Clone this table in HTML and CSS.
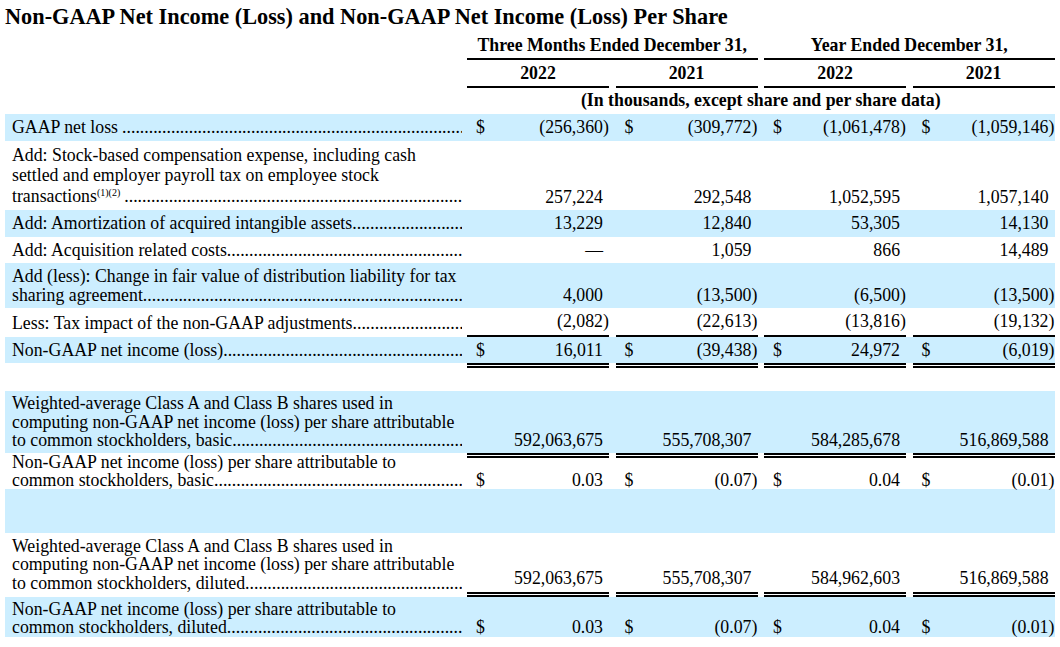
FILE: index.html
```html
<!DOCTYPE html>
<html lang="en">
<head>
<meta charset="utf-8">
<title>Non-GAAP Net Income (Loss)</title>
<link rel="stylesheet" href="styles.css">
</head>
<body>
<h1 class="title">Non-GAAP Net Income (Loss) and Non-GAAP Net Income (Loss) Per Share</h1>
<table class="fin">
<colgroup>
<col class="c-lbl">
<col class="c-cur"><col class="c-num"><col class="c-par"><col class="c-sp">
<col class="c-cur"><col class="c-num"><col class="c-par"><col class="c-sp">
<col class="c-cur"><col class="c-num"><col class="c-par"><col class="c-sp">
<col class="c-cur"><col class="c-num"><col class="c-par">
</colgroup>
<thead>
<tr class="hd1"><td></td><th colspan="7" class="ul">Three Months Ended December 31,</th><td></td><th colspan="7" class="ul">Year Ended December 31,</th></tr>
<tr class="hd2"><td></td><th colspan="3" class="ul">2022</th><td></td><th colspan="3" class="ul">2021</th><td></td><th colspan="3" class="ul">2022</th><td></td><th colspan="3" class="ul">2021</th></tr>
<tr class="hd3"><td></td><th colspan="15">(In thousands, except share and per share data)</th></tr>
</thead>
<tbody>
<tr class="b"><td class="lbl"><div class="lw"><div class="ld"><span class="gap">GAAP net loss</span><i></i></div></div></td>
<td class="cur">$</td><td class="num">(256,360</td><td class="par">)</td><td></td>
<td class="cur">$</td><td class="num">(309,772</td><td class="par">)</td><td></td>
<td class="cur">$</td><td class="num">(1,061,478</td><td class="par">)</td><td></td>
<td class="cur">$</td><td class="num">(1,059,146</td><td class="par">)</td></tr>

<tr class="sbc"><td class="lbl"><div class="lw">Add: Stock-based compensation expense, including cash<br>settled and employer payroll tax on employee stock<div class="ld"><span class="gap">transactions<sup>(1)(2)</sup></span><i></i></div></div></td>
<td class="cur"></td><td class="num">257,224</td><td class="par"></td><td></td>
<td class="cur"></td><td class="num">292,548</td><td class="par"></td><td></td>
<td class="cur"></td><td class="num">1,052,595</td><td class="par"></td><td></td>
<td class="cur"></td><td class="num">1,057,140</td><td class="par"></td></tr>

<tr class="b"><td class="lbl"><div class="lw"><div class="ld"><span>Add: Amortization of acquired intangible assets</span><i></i></div></div></td>
<td class="cur"></td><td class="num">13,229</td><td class="par"></td><td></td>
<td class="cur"></td><td class="num">12,840</td><td class="par"></td><td></td>
<td class="cur"></td><td class="num">53,305</td><td class="par"></td><td></td>
<td class="cur"></td><td class="num">14,130</td><td class="par"></td></tr>

<tr><td class="lbl"><div class="lw"><div class="ld"><span>Add: Acquisition related costs</span><i></i></div></div></td>
<td class="cur"></td><td class="num">—</td><td class="par"></td><td></td>
<td class="cur"></td><td class="num">1,059</td><td class="par"></td><td></td>
<td class="cur"></td><td class="num">866</td><td class="par"></td><td></td>
<td class="cur"></td><td class="num">14,489</td><td class="par"></td></tr>

<tr class="b"><td class="lbl"><div class="lw">Add (less): Change in fair value of distribution liability for tax<div class="ld"><span>sharing agreement</span><i></i></div></div></td>
<td class="cur"></td><td class="num">4,000</td><td class="par"></td><td></td>
<td class="cur"></td><td class="num">(13,500</td><td class="par">)</td><td></td>
<td class="cur"></td><td class="num">(6,500</td><td class="par">)</td><td></td>
<td class="cur"></td><td class="num">(13,500</td><td class="par">)</td></tr>

<tr><td class="lbl"><div class="lw"><div class="ld"><span>Less: Tax impact of the non-GAAP adjustments</span><i></i></div></div></td>
<td class="cur bb"></td><td class="num bb">(2,082</td><td class="par bb">)</td><td></td>
<td class="cur bb"></td><td class="num bb">(22,613</td><td class="par bb">)</td><td></td>
<td class="cur bb"></td><td class="num bb">(13,816</td><td class="par bb">)</td><td></td>
<td class="cur bb"></td><td class="num bb">(19,132</td><td class="par bb">)</td></tr>

<tr class="b"><td class="lbl"><div class="lw"><div class="ld"><span>Non-GAAP net income (loss)</span><i></i></div></div></td>
<td class="cur">$</td><td class="num">16,011</td><td class="par"></td><td></td>
<td class="cur">$</td><td class="num">(39,438</td><td class="par">)</td><td></td>
<td class="cur">$</td><td class="num">24,972</td><td class="par"></td><td></td>
<td class="cur">$</td><td class="num">(6,019</td><td class="par">)</td></tr>

<tr class="blank"><td></td>
<td class="dt"></td><td class="dt"></td><td class="dt"></td><td></td>
<td class="dt"></td><td class="dt"></td><td class="dt"></td><td></td>
<td class="dt"></td><td class="dt"></td><td class="dt"></td><td></td>
<td class="dt"></td><td class="dt"></td><td class="dt"></td></tr>

<tr class="b wa"><td class="lbl"><div class="lw">Weighted-average Class A and Class B shares used in<br>computing non-GAAP net income (loss) per share attributable<div class="ld"><span>to common stockholders, basic</span><i></i></div></div></td>
<td class="cur"></td><td class="num">592,063,675</td><td class="par"></td><td></td>
<td class="cur"></td><td class="num">555,708,307</td><td class="par"></td><td></td>
<td class="cur"></td><td class="num">584,285,678</td><td class="par"></td><td></td>
<td class="cur"></td><td class="num">516,869,588</td><td class="par"></td></tr>

<tr class="ps"><td class="lbl"><div class="lw">Non-GAAP net income (loss) per share attributable to<div class="ld"><span>common stockholders, basic</span><i></i></div></div></td>
<td class="cur dt">$</td><td class="num dt">0.03</td><td class="par dt"></td><td></td>
<td class="cur dt">$</td><td class="num dt">(0.07</td><td class="par dt">)</td><td></td>
<td class="cur dt">$</td><td class="num dt">0.04</td><td class="par dt"></td><td></td>
<td class="cur dt">$</td><td class="num dt">(0.01</td><td class="par dt">)</td></tr>

<tr class="b empty"><td></td><td></td><td></td><td></td><td></td><td></td><td></td><td></td><td></td><td></td><td></td><td></td><td></td><td></td><td></td><td></td></tr>

<tr class="wd"><td class="lbl"><div class="lw">Weighted-average Class A and Class B shares used in<br>computing non-GAAP net income (loss) per share attributable<div class="ld"><span>to common stockholders, diluted</span><i></i></div></div></td>
<td class="cur db"></td><td class="num db">592,063,675</td><td class="par db"></td><td></td>
<td class="cur db"></td><td class="num db">555,708,307</td><td class="par db"></td><td></td>
<td class="cur db"></td><td class="num db">584,962,603</td><td class="par db"></td><td></td>
<td class="cur db"></td><td class="num db">516,869,588</td><td class="par db"></td></tr>

<tr class="b ps last"><td class="lbl"><div class="lw">Non-GAAP net income (loss) per share attributable to<div class="ld"><span>common stockholders, diluted</span><i></i></div></div></td>
<td class="cur">$</td><td class="num">0.03</td><td class="par"></td><td></td>
<td class="cur">$</td><td class="num">(0.07</td><td class="par">)</td><td></td>
<td class="cur">$</td><td class="num">0.04</td><td class="par"></td><td></td>
<td class="cur">$</td><td class="num">(0.01</td><td class="par">)</td></tr>
</tbody>
</table>
</body>
</html>
```

FILE: styles.css
```css
html, body {
  margin: 0;
  padding: 0;
  background: #ffffff;
}

body {
  padding: 4px 5px 0;
  font-family: "Liberation Serif", "Times New Roman", serif;
  font-size: 17.8px;
  line-height: 18.5px;
  color: #000000;
}

.title {
  margin: 0;
  font-size: 22.3px;
  line-height: 26px;
  font-weight: bold;
}

.fin {
  border-collapse: separate;
  border-spacing: 0;
  table-layout: fixed;
  width: 1049.5px;
}

.c-lbl { width: 462px; }
.c-cur { width: 26px; }
.c-num { width: 110px; }
.c-par { width: 6px; }
.c-sp { width: 6.5px; }

td, th {
  padding: 4px 0;
  vertical-align: bottom;
}

th {
  font-weight: bold;
  text-align: center;
  white-space: nowrap;
}

.hd1 th { padding: 6px 0 3px; }
.hd2 th { padding: 4px 0 4px; }
.hd3 th { padding: 3px 0 4.5px; }

.ul { border-bottom: 2px solid #000000; }

tr.b { background: #cceeff; }

.lw {
  padding: 0 5px 0 7px;
  white-space: nowrap;
}

.sbc .lw { line-height: 20.5px; }

.wa td { padding: 3px 0; }
.wd td { padding: 3.5px 0 5px; }

.ps td { padding: 0; line-height: 18px; }
.ps .lw { line-height: 18px; }
.last td { padding: 3px 0 1px; }

.ld { display: flex; }
.ld span { white-space: nowrap; }
.ld span.gap { padding-right: 4px; }
.ld i {
  flex: 1;
  min-width: 0;
  overflow: hidden;
  white-space: nowrap;
  font-style: normal;
}
.ld i::after {
  content: "........................................................................................................................................................................";
}

sup {
  font-size: 10px;
  line-height: 0;
  vertical-align: 6px;
}

.cur { text-indent: 9px; text-align: left; white-space: nowrap; }
.num { text-align: right; white-space: nowrap; }
.par { text-align: left; white-space: nowrap; }

.bb { border-bottom: 2px solid #000000; }
.dt { border-top: 5px double #000000; }
.db { border-bottom: 5px double #000000; }

.blank td { padding: 0; height: 23px; }
.empty td { padding: 0; height: 44.5px; }
```
